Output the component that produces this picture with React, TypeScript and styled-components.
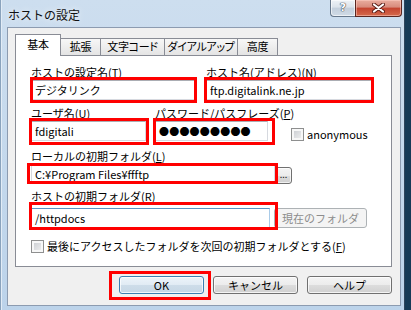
import React from "react"
import styled, { createGlobalStyle } from "styled-components"

const GlobalStyle = createGlobalStyle`
  html, body {
    margin: 0;
    padding: 0;
  }
  body {
    width: 411px;
    height: 310px;
    overflow: hidden;
    background: linear-gradient(to right, #2a6a92, #163a56);
    font-family: "Noto Sans CJK JP", "Noto Sans", sans-serif;
    color: #000;
  }
`

const tabs = [
  { label: "基本", w: 46, active: true },
  { label: "拡張", w: 41 },
  { label: "文字コード", w: 65 },
  { label: "ダイアルアップ", w: 74 },
  { label: "高度", w: 41 },
]

const App: React.FC = () => {
  return (
    <>
      <GlobalStyle />
      <Window>
        <TitleBar>
          <Title>ホストの設定</Title>
          <CaptionButtons>
            <HelpButton>?</HelpButton>
            <CloseButton>
              <svg width="13" height="10" viewBox="0 0 13 10">
                <path d="M2 1.5 L11 8.5 M11 1.5 L2 8.5" stroke="#5a1d16" strokeWidth="4" strokeLinecap="round" />
                <path d="M2 1.5 L11 8.5 M11 1.5 L2 8.5" stroke="#ffffff" strokeWidth="2.2" strokeLinecap="round" />
              </svg>
            </CloseButton>
          </CaptionButtons>
        </TitleBar>

        <Client>
          <TabStrip>
            {tabs.map((t) => (
              <Tab key={t.label} $w={t.w} $active={t.active}>
                {t.label}
              </Tab>
            ))}
          </TabStrip>

          <Panel>
            <Row>
              <Group $w={164}>
                <Label>
                  ホストの設定名(<u>T</u>)
                </Label>
                <Marked $inset="-3px -2px -3px -1px">
                  <TextBox $w={164}>デジタリンク</TextBox>
                </Marked>
              </Group>
              <Group $w={166}>
                <Label>
                  ホスト名(アドレス)(<u>N</u>)
                </Label>
                <Marked $inset="-3px -2px -3px -2px">
                  <TextBox $w={166}>ftp.digitalink.ne.jp</TextBox>
                </Marked>
              </Group>
            </Row>

            <Row $mt={7} $gap={9}>
              <Group $w={115}>
                <Label>
                  ユーザ名(<u>U</u>)
                </Label>
                <Marked $inset="-3px -3px -4px -2px">
                  <TextBox $w={115}>fdigitali</TextBox>
                </Marked>
              </Group>
              <Group $w={113}>
                <Label>
                  パスワード/パスフレーズ(<u>P</u>)
                </Label>
                <Marked $inset="-3px -7px -4px -2px">
                  <TextBox $w={113}>
                    <Dots>●●●●●●●●●</Dots>
                  </TextBox>
                </Marked>
              </Group>
              <Check $ml={14}>
                <CheckBox />
                <CheckText>anonymous</CheckText>
              </Check>
            </Row>

            <Group $mt={9}>
              <Label>
                ローカルの初期フォルダ(<u>L</u>)
              </Label>
              <Line>
                <Marked $inset="-1px -3px 0 -4px">
                  <TextBox $w={244}>C:¥Program Files¥ffftp</TextBox>
                </Marked>
                <SmallButton>...</SmallButton>
              </Line>
            </Group>

            <Group $mt={6}>
              <Label>
                ホストの初期フォルダ(<u>R</u>)
              </Label>
              <Line $mt={4}>
                <Marked $inset="-6px -8px -2px -2px">
                  <TextBox $w={239} $focus>
                    /httpdocs
                  </TextBox>
                </Marked>
                <DisabledButton>現在のフォルダ</DisabledButton>
              </Line>
            </Group>

            <Check $mt={12}>
              <CheckBox />
              <CheckText>
                最後にアクセスしたフォルダを次回の初期フォルダとする(<u>F</u>)
              </CheckText>
            </Check>
          </Panel>

          <ButtonBar>
            <Marked $inset="-5px -7px -6px -10px">
              <DialogButton $default>OK</DialogButton>
            </Marked>
            <DialogButton>キャンセル</DialogButton>
            <DialogButton>ヘルプ</DialogButton>
          </ButtonBar>
        </Client>
      </Window>
    </>
  )
}

const Window = styled.div`
  width: 405px;
  height: 310px;
  box-sizing: border-box;
  display: flex;
  flex-direction: column;
  background: linear-gradient(to bottom, #cddeef, #bcd3ea);
  border-right: 1px solid #2f455c;
  box-shadow: inset 1px 0 0 #8aa3bd, inset 2px 0 0 #e2ecf6;
`

const TitleBar = styled.div`
  height: 27px;
  display: flex;
  align-items: flex-start;
  padding: 0 2px 0 8px;
  box-sizing: border-box;
`

const Title = styled.div`
  margin-top: 7px;
  font-size: 12px;
  line-height: 15px;
  color: #111;
  text-shadow: 0 0 6px rgba(255, 255, 255, 0.9);
`

const CaptionButtons = styled.div`
  margin-left: auto;
  display: flex;
`

const HelpButton = styled.div`
  width: 25px;
  height: 17px;
  box-sizing: border-box;
  border: 1px solid #66778b;
  border-top: none;
  border-right: none;
  border-radius: 0 0 0 4px;
  background: linear-gradient(#eef2f6, #dce3eb 45%, #c3cfdc 50%, #d0dbe6);
  box-shadow: inset 0 0 0 1px rgba(255, 255, 255, 0.6);
  font-family: "DejaVu Sans", sans-serif;
  font-weight: bold;
  font-size: 11px;
  line-height: 16px;
  text-align: center;
  color: #fff;
  text-shadow: 0 0 1px #3c4652, 0 0 1px #3c4652, 0 0 1px #3c4652;
`

const CloseButton = styled.div`
  width: 47px;
  height: 17px;
  box-sizing: border-box;
  border: 1px solid #5b2620;
  border-top: none;
  border-radius: 0 0 4px 0;
  background: linear-gradient(#e9ad9f, #d88a7b 45%, #c4432f 50%, #d56a4c);
  box-shadow: inset 0 0 0 1px rgba(255, 210, 200, 0.5);
  display: flex;
  align-items: center;
  justify-content: center;
`

const Client = styled.div`
  flex: 1;
  margin: 0 3px 4px 7px;
  box-sizing: border-box;
  border: 1px solid #8c9bb0;
  background: #f0f0f0;
  padding: 6px 8px 0 7px;
  display: flex;
  flex-direction: column;
`

const TabStrip = styled.div`
  display: flex;
  align-items: flex-end;
  height: 22px;
  margin-bottom: -1px;
`

const Tab = styled.div<{ $w: number; $active?: boolean }>`
  box-sizing: border-box;
  width: ${(p) => p.$w}px;
  height: ${(p) => (p.$active ? 22 : 17)}px;
  margin-bottom: ${(p) => (p.$active ? 0 : 1)}px;
  border: 1px solid #898c95;
  border-bottom: none;
  background: ${(p) => (p.$active ? "#fff" : "linear-gradient(#f7f7f7, #e4e4e4)")};
  position: relative;
  z-index: ${(p) => (p.$active ? 1 : 0)};
  font-size: 11px;
  line-height: ${(p) => (p.$active ? 19 : 15)}px;
  letter-spacing: -0.3px;
  text-align: center;
  white-space: nowrap;
  font-feature-settings: "palt";
  & + & {
    margin-left: -1px;
  }
`

const Panel = styled.div`
  height: 212px;
  box-sizing: border-box;
  border: 1px solid #898c95;
  background: #fff;
  padding: 10px 0 0 15px;
  display: flex;
  flex-direction: column;
`

const Row = styled.div<{ $mt?: number; $gap?: number }>`
  display: flex;
  align-items: flex-end;
  gap: ${(p) => p.$gap ?? 11}px;
  margin-top: ${(p) => p.$mt ?? 0}px;
`

const Group = styled.div<{ $w?: number; $mt?: number }>`
  display: flex;
  flex-direction: column;
  width: ${(p) => (p.$w ? `${p.$w}px` : "auto")};
  margin-top: ${(p) => p.$mt ?? 0}px;
`

const Label = styled.div`
  font-size: 11px;
  line-height: 13px;
  height: 13px;
  margin-bottom: 1px;
  white-space: nowrap;
`

const Line = styled.div<{ $mt?: number }>`
  display: flex;
  align-items: flex-end;
  margin-top: ${(p) => p.$mt ?? 0}px;
`

const Marked = styled.div<{ $inset: string }>`
  position: relative;
  display: flex;
  &::after {
    content: "";
    position: absolute;
    inset: ${(p) => p.$inset};
    border: 3px solid #ff0000;
    pointer-events: none;
    z-index: 2;
  }
`

const TextBox = styled.div<{ $w: number; $focus?: boolean }>`
  box-sizing: border-box;
  width: ${(p) => p.$w}px;
  height: 20px;
  border: 1px solid ${(p) => (p.$focus ? "#a9cbe8" : "#d6d9df")};
  border-top-color: ${(p) => (p.$focus ? "#5b93c4" : "#abadb3")};
  background: #fff;
  padding: 0 3px;
  font-size: 11px;
  line-height: 18px;
  white-space: nowrap;
  overflow: hidden;
`

const Dots = styled.span`
  font-size: 10px;
  letter-spacing: 0.2px;
`

const Check = styled.div<{ $mt?: number; $ml?: number }>`
  display: flex;
  align-items: center;
  margin-top: ${(p) => p.$mt ?? 0}px;
  margin-left: ${(p) => p.$ml ?? 0}px;
`

const CheckBox = styled.span`
  width: 13px;
  height: 13px;
  box-sizing: border-box;
  border: 1px solid #8e8f8f;
  background: linear-gradient(135deg, #c6c9ce, #f3f3f3);
  box-shadow: inset 0 0 0 2px #f7f7f7;
  flex-shrink: 0;
`

const CheckText = styled.span`
  margin-left: 3px;
  font-size: 11px;
  line-height: 13px;
  white-space: nowrap;
`

const SmallButton = styled.div`
  width: 17px;
  height: 17px;
  box-sizing: border-box;
  border: 1px solid #707070;
  border-radius: 3px;
  background: linear-gradient(#f4f4f4, #ececec 50%, #dcdcdc 50%, #d0d0d0);
  box-shadow: inset 0 0 0 1px rgba(255, 255, 255, 0.7);
  font-size: 9px;
  line-height: 13px;
  text-align: center;
  color: #222;
`

const DisabledButton = styled.div`
  width: 93px;
  height: 20px;
  margin-left: 4px;
  box-sizing: border-box;
  border: 1px solid #adb2b5;
  border-radius: 3px;
  background: #f4f4f4;
  font-size: 11px;
  line-height: 18px;
  text-align: center;
  color: #8d8d8d;
  white-space: nowrap;
`

const ButtonBar = styled.div`
  display: flex;
  justify-content: flex-end;
  gap: 9px;
  margin-top: 9px;
`

const DialogButton = styled.div<{ $default?: boolean }>`
  width: 85px;
  height: 18px;
  box-sizing: border-box;
  border: 1px solid ${(p) => (p.$default ? "#3c7fb1" : "#707070")};
  border-radius: 3px;
  background: ${(p) =>
    p.$default
      ? "linear-gradient(#edf4fa, #e1ebf4 50%, #cedde9 50%, #c6d7e6)"
      : "linear-gradient(#f4f4f4, #ececec 50%, #dddddd 50%, #d0d0d0)"};
  box-shadow: inset 0 0 0 1px rgba(255, 255, 255, 0.75);
  font-size: 11px;
  line-height: 16px;
  text-align: center;
  white-space: nowrap;
`

export default App
